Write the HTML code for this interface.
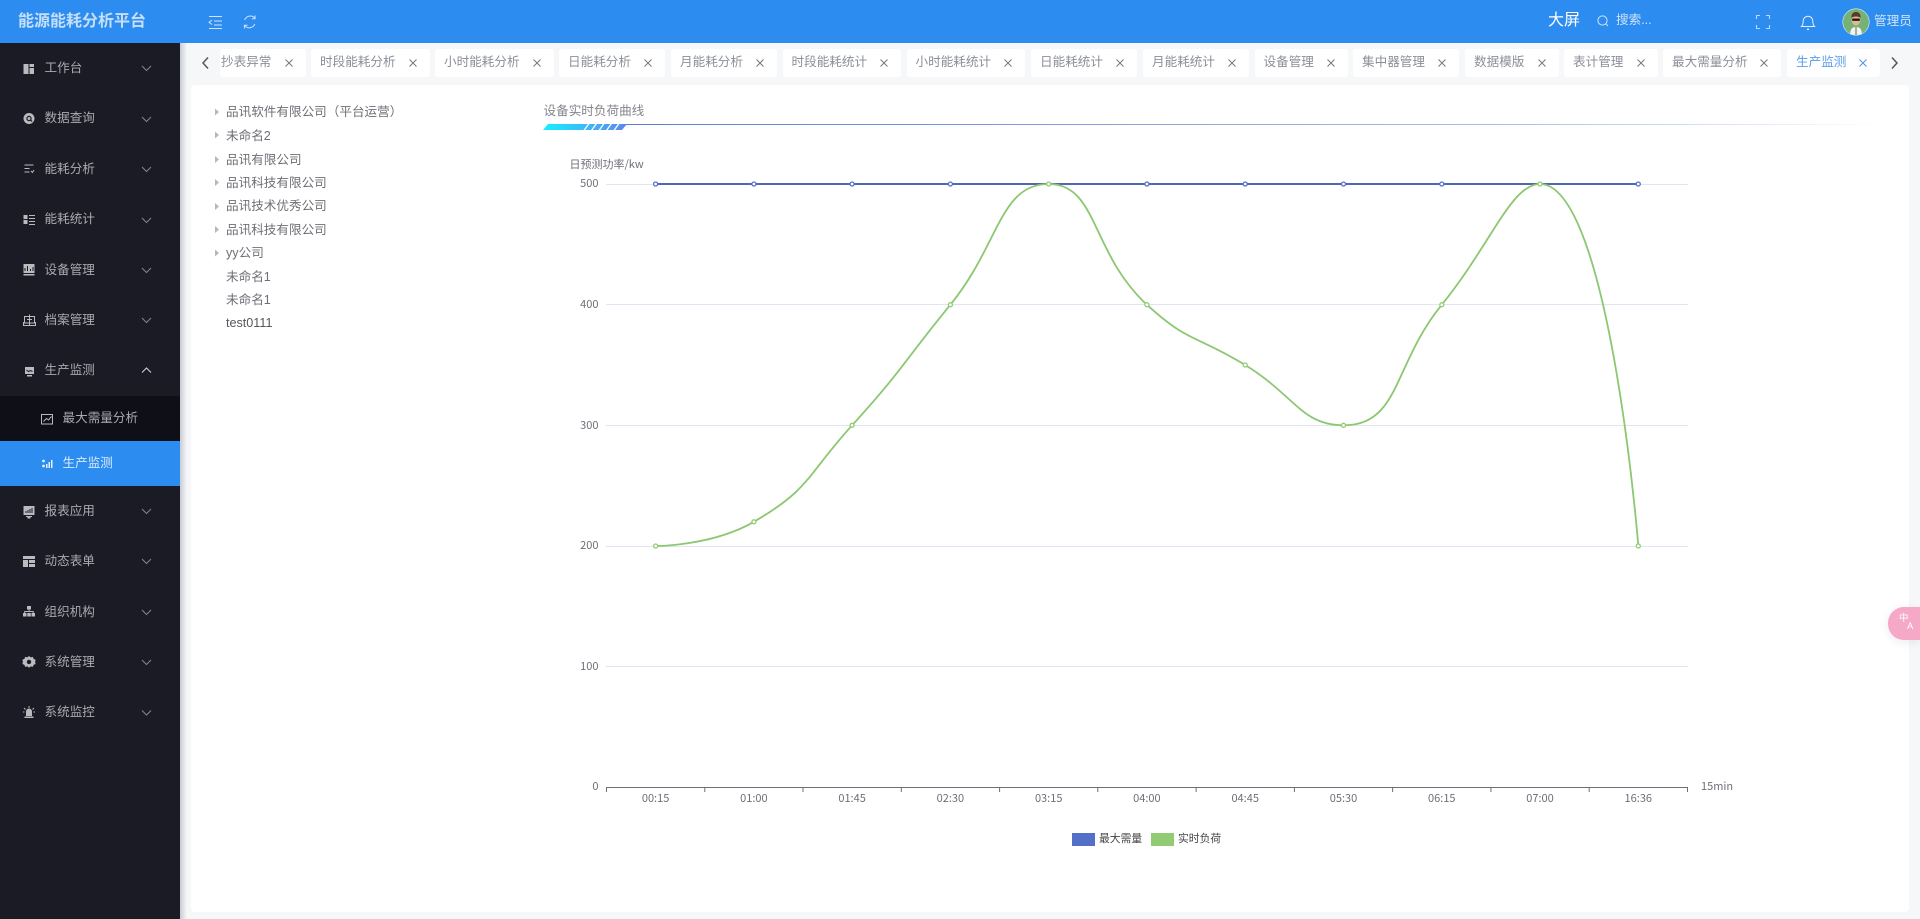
<!DOCTYPE html>
<html lang="zh">
<head>
<meta charset="utf-8">
<title>能源能耗分析平台</title>
<style>
*{box-sizing:border-box;margin:0;padding:0}
html,body{width:1920px;height:919px;overflow:hidden;background:#f5f7f9;font-family:"Liberation Sans","Noto Sans CJK SC",sans-serif;font-size:12.6px}
.a{position:absolute;white-space:nowrap}
#hd{left:0;top:0;width:1920px;height:43px;background:#2d8cf0}
#sb{left:0;top:43px;width:180px;height:876px;background:#1a1b25}
#shadow{left:180px;top:43px;width:7px;height:876px;background:linear-gradient(90deg,#c9ccd3,#f5f7f9)}
#card{left:191px;top:85px;width:1718px;height:827px;background:#fff;border-radius:4px}
.m{position:absolute;left:44.5px;line-height:20px;height:20px;color:#a9abb0;font-size:12.6px;white-space:nowrap}
.tab{position:absolute;top:49px;height:28px;background:#fff;border-radius:3px;color:#8b8f98;line-height:27px;font-size:12.6px;padding-left:9px;white-space:nowrap}
.tab svg{position:absolute;top:10px;right:13px}
.t{position:absolute;left:226px;line-height:20px;height:20px;font-size:12.6px;color:#6d6f75;white-space:nowrap}
</style>
</head>
<body>
<div class="a" id="hd"></div>
<div class="a" style="left:18px;top:11px;font-size:16px;line-height:22px;font-weight:bold;color:#c6dffa">能源能耗分析平台</div>
<svg class="a" style="left:205px;top:14px" width="60" height="16" fill="none" stroke="#cfe4fb" stroke-width="1">
<path d="M4 2.500H17M9 7H17M9 11H17M4 14.500H17M7 6 4 8.200 7 10.500"/>
<path d="M50 4.200A6 6 0 0 0 39.700 6M39.500 11.500A6 6 0 0 0 49.800 10M50 1.500V4.800H46.800M39.400 14.500V11.200H42.600"/>
</svg>
<div class="a" style="left:1548px;top:10px;font-size:16px;line-height:22px;color:#fff">大屏</div>
<svg class="a" style="left:1596px;top:14px" width="14" height="14" fill="none" stroke="#cfe4fb" stroke-width="1"><circle cx="6.500" cy="6.500" r="4.600"/><path d="M10 10l2 2"/></svg>
<div class="a" style="left:1616px;top:10px;line-height:20px;color:#cfe4fb">搜索...</div>
<svg class="a" style="left:1755px;top:14px" width="16" height="16" fill="none" stroke="#bcd9f9" stroke-width="1.100"><path d="M1.500 5V1.500H5M11 1.500H14.500V5M14.500 11V14.500H11M5 14.500H1.500V11"/></svg>
<svg class="a" style="left:1800px;top:13px" width="16" height="18" fill="none" stroke="#e4f0fd" stroke-width="1"><path d="M1.500 13.500H14.500C12.800 12 12.800 10 12.800 8A4.800 4.800 0 0 0 3.200 8C3.200 10 3.200 12 1.500 13.500Z"/><path d="M7 16.300H9" stroke-width="1.400"/></svg>
<svg class="a" style="left:1842px;top:8px" width="28" height="28" viewBox="0 0 28 28">
<defs><clipPath id="av"><circle cx="14" cy="14" r="13"/></clipPath></defs>
<circle cx="14" cy="14" r="13.500" fill="#fff"/>
<g clip-path="url(#av)"><rect width="28" height="28" fill="#76b276"/>
<path d="M8 28C8 21 10 19 14 19S20 21 20 28Z" fill="#f2f2ee"/><path d="M13.300 19h1.400v9h-1.400z" fill="#8a8f92"/>
<ellipse cx="14" cy="11.500" rx="4.400" ry="6" fill="#e3b88f"/><path d="M9.500 10C9 5 12 4 14 4S19 5 18.500 10C17 8 11 8 9.500 10Z" fill="#5a3a25"/>
<rect x="10" y="10.500" width="8" height="2.400" rx="1" fill="#1d1d1d"/></g>
</svg>
<div class="a" style="left:1874px;top:11px;line-height:20px;color:#cfe4fb">管理员</div>

<div class="a" id="sb"></div>
<div class="a" style="left:0;top:396px;width:180px;height:45px;background:#0f1017"></div>
<div class="a" style="left:0;top:441px;width:180px;height:45px;background:#2d8cf0"></div>
<div class="m" style="top:58px">工作台</div>
<div class="m" style="top:108px">数据查询</div>
<div class="m" style="top:158.500px">能耗分析</div>
<div class="m" style="top:209px">能耗统计</div>
<div class="m" style="top:260px">设备管理</div>
<div class="m" style="top:310px">档案管理</div>
<div class="m" style="top:360px">生产监测</div>
<div class="m" style="left:62.500px;top:408px">最大需量分析</div>
<div class="m" style="left:62.500px;top:453px;color:#d9ebfd">生产监测</div>
<div class="m" style="top:501px">报表应用</div>
<div class="m" style="top:551px">动态表单</div>
<div class="m" style="top:602px">组织机构</div>
<div class="m" style="top:652px">系统管理</div>
<div class="m" style="top:702px">系统监控</div>
<svg class="a" style="left:0;top:0" width="180" height="919" fill="none">
<g stroke="#85868d" stroke-width="1" transform="translate(0,-0.500)">
<path d="M142 66.500l4.500 4.500 4.500-4.500M142 117.500l4.500 4.500 4.500-4.500M142 167.500l4.500 4.500 4.500-4.500M142 218.500l4.500 4.500 4.500-4.500M142 268.500l4.500 4.500 4.500-4.500M142 318.500l4.500 4.500 4.500-4.500M142 509.500l4.500 4.500 4.500-4.500M142 559.500l4.500 4.500 4.500-4.500M142 610.500l4.500 4.500 4.500-4.500M142 660.500l4.500 4.500 4.500-4.500M142 711l4.500 4.500 4.500-4.500"/>
<path d="M142 373l4.500-4.500 4.500 4.500" stroke="#d5d6d9"/>
</g>
<g fill="#b9bbbf">
<path d="M23.500 64h5v10h-5zM29.500 64h4.500v3h-4.500zM29.500 68h4.500v6h-4.500z"/>
<circle cx="29" cy="118.500" r="5.500"/>
<path d="M23.500 215h4v4h-4zM23.500 220h4v4h-4zM29 215h6v1h-6zM29 218h6v1h-6zM29 221h6v1h-6zM29 224h6v1h-6z"/>
<path d="M23.500 264h11v9h-11zM23.500 274h11v1.500h-11z"/>
<path d="M25 367h9v7h-9zM27 375h5v1.500h-5z"/>
<path d="M23.500 506h11v9h-11zM26 516h6v1h-6zM27.500 517h3v1.500h-3z"/>
<path d="M23 556h12v3h-12zM23 560h5v7h-5zM29 560h6v3h-6zM29 564h6v3h-6z"/>
<path d="M27 606h4v3.500h-4zM23 613h3.500v3.500h-3.500zM27.300 613h3.500v3.500h-3.500zM31.500 613h3.500v3.500h-3.500z"/>
<path d="M29 656l1.700 1.400 2.100-.5.800 2 2 .9-.5 2.100.5 2.100-2 .9-.8 2-2.100-.5-1.700 1.400-1.700-1.400-2.100.5-.8-2-2-.9.5-2.100-.5-2.100 2-.9.800-2 2.100.5z"/>
<path d="M26 711.500a3 3 0 0 1 6 0V716h-6zM24.500 716.500h9v1.500h-9z"/>
</g>
<circle cx="29" cy="118.500" r="2.100" stroke="#1a1b25" stroke-width="1.200"/><path d="M30.500 120l1.600 1.600" stroke="#1a1b25" stroke-width="1.200"/>
<circle cx="29" cy="661.900" r="2.200" fill="#1a1b25"/>
<g stroke="#b9bbbf" stroke-width="1">
<path d="M24.500 165h9M24.500 168.500h5M24.500 172h5" /><path d="M31 171l1.500 1.500L34 170" />
<path d="M25 271v-3M27.500 271v-5M30.500 271v-2M33 271v-4" stroke="#1a1b25"/>
<path d="M24.500 316.500h10v6.500h-10zM29.500 314.500v11M27 319.500h5M23.500 322v3.500h12v-3.500"/>
<path d="M26.500 370l2 1.500 2-1 2 1" stroke="#1a1b25"/>
<path d="M26 513v-2M28 513v-3M30 513v-4M32 513v-5" stroke="#1a1b25"/>
<path d="M29 609.500v2M24.700 613v-1.500h8.500v1.500"/>
<path d="M29 706v2M24 708l1.500 1.500M34 708l-1.500 1.500M23 712h1.500M33.500 712H35"/>
<path d="M41.500 414.500h11v9.500h-11zM43.500 421.500l3-3 2 1.500 3-3.500"/>
</g>
<g fill="#e3f0fd"><circle cx="43.500" cy="461" r="1.400"/><circle cx="43.500" cy="466" r="1.400"/><path d="M46 464h1.500v4H46zM48.500 462h1.500v6h-1.500zM51 460h1.500v8H51z"/></g>
</svg>
<div class="a" id="shadow"></div>

<svg class="a" style="left:198px;top:54px" width="14" height="18" fill="none" stroke="#54575e" stroke-width="1.500"><path d="M10 3.500 5 9l5 5.500"/></svg>
<svg class="a" style="left:1888px;top:54px" width="14" height="18" fill="none" stroke="#54575e" stroke-width="1.500"><path d="M4 3.500 9 9l-5 5.500"/></svg>

<div class="tab" style="left:220px;width:86px;padding-left:1px">抄表异常<svg width="8" height="8" stroke="#777" fill="none"><path d="M.5.500l7 7M7.500.500l-7 7"/></svg></div>
<div class="tab" style="left:311px;width:118.500px">时段能耗分析<svg width="8" height="8" stroke="#777" fill="none"><path d="M.5.500l7 7M7.500.500l-7 7"/></svg></div>
<div class="tab" style="left:435px;width:118.500px">小时能耗分析<svg width="8" height="8" stroke="#777" fill="none"><path d="M.5.500l7 7M7.500.500l-7 7"/></svg></div>
<div class="tab" style="left:559px;width:106px">日能耗分析<svg width="8" height="8" stroke="#777" fill="none"><path d="M.5.500l7 7M7.500.500l-7 7"/></svg></div>
<div class="tab" style="left:671px;width:106px">月能耗分析<svg width="8" height="8" stroke="#777" fill="none"><path d="M.5.500l7 7M7.500.500l-7 7"/></svg></div>
<div class="tab" style="left:782.500px;width:118.500px">时段能耗统计<svg width="8" height="8" stroke="#777" fill="none"><path d="M.5.500l7 7M7.500.500l-7 7"/></svg></div>
<div class="tab" style="left:906.500px;width:118.500px">小时能耗统计<svg width="8" height="8" stroke="#777" fill="none"><path d="M.5.500l7 7M7.500.500l-7 7"/></svg></div>
<div class="tab" style="left:1031px;width:106px">日能耗统计<svg width="8" height="8" stroke="#777" fill="none"><path d="M.5.500l7 7M7.500.500l-7 7"/></svg></div>
<div class="tab" style="left:1143px;width:106px">月能耗统计<svg width="8" height="8" stroke="#777" fill="none"><path d="M.5.500l7 7M7.500.500l-7 7"/></svg></div>
<div class="tab" style="left:1254.500px;width:93.500px">设备管理<svg width="8" height="8" stroke="#777" fill="none"><path d="M.5.500l7 7M7.500.500l-7 7"/></svg></div>
<div class="tab" style="left:1353px;width:106px">集中器管理<svg width="8" height="8" stroke="#777" fill="none"><path d="M.5.500l7 7M7.500.500l-7 7"/></svg></div>
<div class="tab" style="left:1465px;width:93.500px">数据模版<svg width="8" height="8" stroke="#777" fill="none"><path d="M.5.500l7 7M7.500.500l-7 7"/></svg></div>
<div class="tab" style="left:1564px;width:93.500px">表计管理<svg width="8" height="8" stroke="#777" fill="none"><path d="M.5.500l7 7M7.500.500l-7 7"/></svg></div>
<div class="tab" style="left:1663px;width:118px">最大需量分析<svg width="8" height="8" stroke="#777" fill="none"><path d="M.5.500l7 7M7.500.500l-7 7"/></svg></div>
<div class="tab" style="left:1787px;width:93px;color:#5b9be8">生产监测<svg width="8" height="8" stroke="#4d94ea" fill="none"><path d="M.5.500l7 7M7.500.500l-7 7"/></svg></div>

<div class="a" id="card"></div>
<svg class="a" style="left:210px;top:100px" width="12" height="160" fill="#b5b8be">
<path d="M5 8.500l4 3.500-4 3.500zM5 31.500l4 3.500-4 3.500zM5 56l4 3.500-4 3.500zM5 79l4 3.500-4 3.500zM5 103l4 3.500-4 3.500zM5 126l4 3.500-4 3.500zM5 149.500l4 3.500-4 3.500z"/>
</svg>
<div class="t" style="top:102px">品讯软件有限公司（平台运营）</div>
<div class="t" style="top:125.500px">未命名2</div>
<div class="t" style="top:149.500px">品讯有限公司</div>
<div class="t" style="top:172.500px">品讯科技有限公司</div>
<div class="t" style="top:195.500px">品讯技术优秀公司</div>
<div class="t" style="top:219.500px">品讯科技有限公司</div>
<div class="t" style="top:242.500px">yy公司</div>
<div class="t" style="top:266.500px">未命名1</div>
<div class="t" style="top:289.500px">未命名1</div>
<div class="t" style="top:312.500px;color:#55575c">test0111</div>

<div class="a" style="left:543.500px;top:101px;line-height:20px;color:#84868c">设备实时负荷曲线</div>

<svg class="a" style="left:0;top:0" width="1920" height="919">
<defs>
<linearGradient id="ln" x1="0" x2="1" y1="0" y2="0"><stop offset="0" stop-color="#5b80cc"/><stop offset=".7" stop-color="#a9bde6"/><stop offset="1" stop-color="#fff"/></linearGradient>
<linearGradient id="bar" gradientUnits="userSpaceOnUse" x1="543" x2="626" y1="0" y2="0"><stop offset="0" stop-color="#17f0ff"/><stop offset="1" stop-color="#5e86ee"/></linearGradient>
</defs>
<rect x="626" y="124" width="1255" height="1" fill="url(#ln)"/>
<path d="M548 124H627L622 130H543Z" fill="url(#bar)"/>
<g stroke="#fff" stroke-width="1.300"><path d="M584 130.500l5-7M591.500 130.500l5-7M599 130.500l5-7M606.500 130.500l5-7M614 130.500l5-7"/></g>

<g stroke="#e0e6f1" stroke-width="1">
<path d="M606 184.500H1688M606 304.500H1688M606 425.500H1688M606 546.500H1688M606 666.500H1688"/>
</g>
<path d="M606 787.500H1688" stroke="#6e7079" stroke-width="1"/>
<g stroke="#6e7079" stroke-width="1"><path d="M606.500 787v5M704.800 787v5M803 787v5M901.300 787v5M999.600 787v5M1097.800 787v5M1196.100 787v5M1294.400 787v5M1392.600 787v5M1490.900 787v5M1589.200 787v5M1687.500 787v5"/></g>

<g font-family="'Noto Sans CJK SC','Liberation Sans',sans-serif" font-size="11" fill="#6e7079">
<g text-anchor="end"><text x="598.500" y="187">500</text><text x="598.500" y="308">400</text><text x="598.500" y="429">300</text><text x="598.500" y="549">200</text><text x="598.500" y="670">100</text><text x="598.500" y="790">0</text></g>
<g text-anchor="middle"><text x="655.600" y="802">00:15</text><text x="753.900" y="802">01:00</text><text x="852.100" y="802">01:45</text><text x="950.400" y="802">02:30</text><text x="1048.700" y="802">03:15</text><text x="1146.900" y="802">04:00</text><text x="1245.200" y="802">04:45</text><text x="1343.500" y="802">05:30</text><text x="1441.800" y="802">06:15</text><text x="1540" y="802">07:00</text><text x="1638.300" y="802">16:36</text></g>
<text x="1701" y="790">15min</text>
<text x="569.500" y="168">日预测功率/kw</text>
</g>

<path d="M655.600 184H1638.300" stroke="#5068b4" stroke-width="2" fill="none"/>
<path d="M655.600 546C655.600 546 712.300 546 753.900 521.800C810.500 488.900 806 476.200 852.100 425.300C904.300 367.700 901.200 365 950.400 304.700C999.600 244.400 999.600 184 1048.700 184C1097.800 184 1090.500 252.700 1146.900 304.700C1188.700 343.200 1196 334.800 1245.200 365C1294.400 395.200 1301.700 425.300 1343.500 425.300C1400 425.300 1392.700 365 1441.800 304.700C1490.900 244.400 1511.200 184 1540 184C1609.400 184 1638.300 546 1638.300 546" stroke="#8cc771" stroke-width="1.800" fill="none"/>
<g fill="#fff" stroke="#5470c6" stroke-width="1.300">
<circle cx="655.600" cy="184" r="2"/><circle cx="753.900" cy="184" r="2"/><circle cx="852.100" cy="184" r="2"/><circle cx="950.400" cy="184" r="2"/><circle cx="1146.900" cy="184" r="2"/><circle cx="1245.200" cy="184" r="2"/><circle cx="1343.500" cy="184" r="2"/><circle cx="1441.800" cy="184" r="2"/><circle cx="1638.300" cy="184" r="2"/>
</g>
<g fill="#fff" stroke="#91cc75" stroke-width="1.300">
<circle cx="655.600" cy="546" r="2"/><circle cx="753.900" cy="521.800" r="2"/><circle cx="852.100" cy="425.300" r="2"/><circle cx="950.400" cy="304.700" r="2"/><circle cx="1048.700" cy="184" r="2"/><circle cx="1146.900" cy="304.700" r="2"/><circle cx="1245.200" cy="365" r="2"/><circle cx="1343.500" cy="425.300" r="2"/><circle cx="1441.800" cy="304.700" r="2"/><circle cx="1540" cy="184" r="2"/><circle cx="1638.300" cy="546" r="2"/>
</g>

<rect x="1072" y="833" width="23" height="13" fill="#5470c6"/>
<rect x="1151" y="833" width="23" height="13" fill="#91cc75"/>
<g font-family="'Noto Sans CJK SC','Liberation Sans',sans-serif" font-size="10.800" fill="#444">
<text x="1099" y="842">最大需量</text><text x="1178" y="842">实时负荷</text>
</g>
</svg>

<div class="a" style="left:1888px;top:607px;width:32px;height:33px;background:#f5a9c6;border-radius:16px 0 0 16px;box-shadow:0 2px 10px rgba(0,0,0,.08)"></div>
<div class="a" style="left:1899px;top:613px;color:#fff;font-size:9.500px;line-height:11px">中</div>
<div class="a" style="left:1907px;top:621px;color:#fff;font-size:9.500px;line-height:11px">A</div>
</body>
</html>
